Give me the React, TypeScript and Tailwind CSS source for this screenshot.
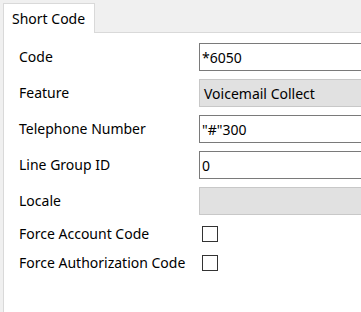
import React from "react";

const font = { fontFamily: '"Noto Sans", "Open Sans", sans-serif' };

function Label({ children }: { children: React.ReactNode }) {
  return <div className="w-[180px] shrink-0 text-[14px] leading-none text-black">{children}</div>;
}

export default function App() {
  return (
    <div className="w-[361px] h-[312px] bg-[#f0f0f0] overflow-hidden flex flex-col" style={font}>
      <div className="h-[32px] pt-[3px] pl-[3px] flex shrink-0">
        <div className="relative z-10 w-[92px] h-[30px] bg-white border-l border-t border-r border-[#d9d9d9] flex items-center pl-[8px] text-[14px] text-black">
          Short Code
        </div>
      </div>
      <div className="flex-1 ml-[3px] bg-white border-l border-t border-[#d9d9d9] pt-[10px] pl-[15px] flex flex-col">
        <div className="flex flex-col gap-2">
          <div className="flex items-center h-[28px]">
            <Label>Code</Label>
            <div className="flex-1 h-full border border-r-0 border-[#7a7a7a] bg-white flex items-center pl-[2px] text-[14px] text-black">*6050</div>
          </div>
          <div className="flex items-center h-[28px]">
            <Label>Feature</Label>
            <div className="flex-1 h-full border border-r-0 border-[#c8c8c8] bg-[#e1e1e1] flex items-center pl-[4px] text-[14px] text-black">Voicemail Collect</div>
          </div>
          <div className="flex items-center h-[28px]">
            <Label>Telephone Number</Label>
            <div className="flex-1 h-full border border-r-0 border-[#7a7a7a] bg-white flex items-center pl-[2px] text-[14px] text-black">"#"300</div>
          </div>
          <div className="flex items-center h-[28px]">
            <Label>Line Group ID</Label>
            <div className="flex-1 h-full border border-r-0 border-[#7a7a7a] bg-white flex items-center pl-[2px] text-[14px] text-black">0</div>
          </div>
          <div className="flex items-center h-[28px]">
            <Label>Locale</Label>
            <div className="flex-1 h-full border border-r-0 border-[#c8c8c8] bg-[#e1e1e1]"></div>
          </div>
        </div>
        <div className="flex flex-col gap-[13px] mt-[11px]">
          <div className="flex items-center h-[16px]">
            <Label>Force Account Code</Label>
            <div className="ml-[3px] w-[16px] h-[16px] border border-[#333333] bg-white"></div>
          </div>
          <div className="flex items-center h-[16px]">
            <Label>Force Authorization Code</Label>
            <div className="ml-[3px] w-[16px] h-[16px] border border-[#333333] bg-white"></div>
          </div>
        </div>
      </div>
    </div>
  );
}
